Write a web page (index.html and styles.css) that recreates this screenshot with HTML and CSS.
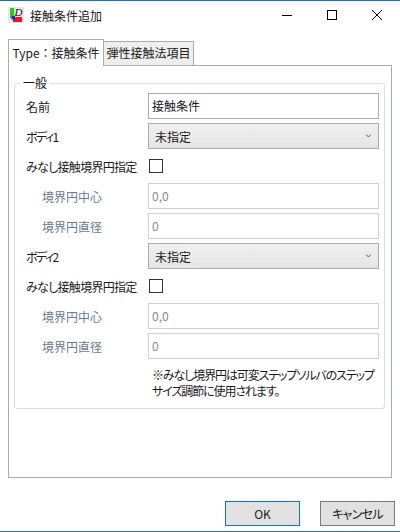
FILE: index.html
```html
<!DOCTYPE html>
<html lang="ja">
<head>
    <meta charset="UTF-8">
    <meta name="viewport" content="width=device-width, initial-scale=1.0">
    <title>接触条件追加</title>
    <link rel="stylesheet" href="styles.css">
</head>
<body>
    <div class="ventana">
        <div class="titulo">
            <svg class="logo" width="16" height="16" viewBox="0 0 16 16">
                <rect width="16" height="16" fill="#e8e8e8"/>
                <rect x="2" y="1" width="4" height="10" fill="#22d022"/>
                <rect x="5" y="10" width="9" height="5" fill="#e81818"/>
                <rect x="3.5" y="9" width="3.5" height="3.5" fill="#1a28e0"/>
                <text x="6.5" y="8.5" class="logo-d">D</text>
            </svg>
            <span class="titulo-texto">接触条件追加</span>
            <div class="controles">
                <svg width="12" height="12" viewBox="0 0 12 12"><path d="M1 6.5h10" stroke="#000" fill="none"/></svg>
                <svg width="12" height="12" viewBox="0 0 12 12"><rect x="1.5" y="1.5" width="9" height="9" stroke="#000" fill="none"/></svg>
                <svg width="12" height="12" viewBox="0 0 12 12"><path d="M1 1l10 10M11 1L1 11" stroke="#000" fill="none"/></svg>
            </div>
        </div>

        <div class="contenido">
            <div class="tabs">
                <div class="tab activa">Type：接触条件</div>
                <div class="tab">弾性接触法項目</div>
            </div>
            <div class="panel">
                <fieldset class="grupo">
                    <legend>一般</legend>
                    <div class="form">
                        <label>名前</label>
                        <div class="campo">接触条件</div>

                        <label class="angosto">ボディ1</label>
                        <div class="combo"><span>未指定</span><svg width="5" height="4" viewBox="0 0 5 4"><path d="M0 .5l2.5 2.5L5 .5" stroke="#555" fill="none"/></svg></div>

                        <label class="kana">みなし接触境界円指定</label>
                        <div class="check-fila"><span class="check"></span></div>

                        <label class="sub">境界円中心</label>
                        <div class="campo off">0,0</div>

                        <label class="sub">境界円直径</label>
                        <div class="campo off">0</div>

                        <label class="angosto">ボディ2</label>
                        <div class="combo"><span>未指定</span><svg width="5" height="4" viewBox="0 0 5 4"><path d="M0 .5l2.5 2.5L5 .5" stroke="#555" fill="none"/></svg></div>

                        <label class="kana">みなし接触境界円指定</label>
                        <div class="check-fila"><span class="check"></span></div>

                        <label class="sub">境界円中心</label>
                        <div class="campo off">0,0</div>

                        <label class="sub">境界円直径</label>
                        <div class="campo off">0</div>

                        <p class="nota">※みなし境界円は可変ステップソルバのステップ<br>サイズ調節に使用されます。</p>
                    </div>
                </fieldset>
            </div>
        </div>

        <div class="botones">
            <button class="principal">OK</button>
            <button class="kana">キャンセル</button>
        </div>
    </div>
</body>
</html>
```

FILE: styles.css
```css
* {
    box-sizing: border-box;
}

body {
    margin: 0;
    background-color: white;
    color: #1a1a1a;
    font-family: "Noto Sans CJK JP", "Noto Sans", sans-serif;
    font-size: 12px;
    font-feature-settings: "palt";
}

.ventana {
    width: 400px;
    height: 532px;
    display: flex;
    flex-direction: column;
    border-top: 1px solid #0f75bd;
    border-bottom: 1px solid #2a6f9f;
}

.titulo {
    height: 28px;
    display: flex;
    align-items: center;
    padding-left: 8px;
}

.logo-d {
    font-family: "Liberation Serif", serif;
    font-style: italic;
    font-size: 11px;
    fill: #111;
}

.titulo-texto {
    margin-left: 6px;
    font-feature-settings: normal;
}

.controles {
    margin-left: auto;
    display: flex;
    gap: 33px;
    padding-right: 17px;
}

.contenido {
    padding: 10px 8px 0;
}

.tabs {
    display: flex;
    align-items: flex-end;
    height: 26px;
    position: relative;
}

.tab {
    height: 24px;
    width: 91px;
    margin-left: -1px;
    line-height: 22px;
    text-align: center;
    background-color: #eee;
    border: 1px solid #ababab;
    border-bottom-width: 0;
}

.tab.activa {
    height: 27px;
    width: 96px;
    margin-left: 0;
    margin-bottom: -1px;
    line-height: 25px;
    background-color: white;
    font-feature-settings: normal;
    position: relative;
    z-index: 1;
}

.panel {
    height: 413px;
    border: 1px solid #ababab;
    padding: 10px 6px 0 5px;
}

.grupo {
    margin: 0;
    height: 333px;
    padding: 0 5px 0 11px;
    border: 1px solid #d5dfe5;
    border-radius: 3px;
}

.grupo legend {
    padding: 0 3px;
    margin-left: -6px;
    line-height: 14px;
}

.form {
    display: grid;
    grid-template-columns: 122px 231px;
    grid-auto-rows: 26px;
    row-gap: 4px;
    margin-top: 3px;
    align-items: center;
}

.kana {
    letter-spacing: -0.7px;
}

.angosto {
    letter-spacing: -1.6px;
}

.sub {
    padding-left: 16px;
    color: #6d7a8c;
}

.campo {
    height: 26px;
    line-height: 24px;
    padding-left: 3px;
    border: 1px solid #abadb3;
}

.campo.off {
    border-color: #d0d0d0;
    color: #8a8a94;
}

.combo {
    height: 26px;
    display: flex;
    align-items: center;
    justify-content: space-between;
    padding: 0 7px 0 6px;
    border: 1px solid #acacac;
    background: linear-gradient(#f0f0f0, #e5e5e5);
}

.check-fila {
    display: flex;
    align-items: center;
}

.check {
    width: 14px;
    height: 14px;
    margin-left: 1px;
    border: 1px solid #333;
    background-color: white;
}

.nota {
    grid-column: 2;
    grid-row: span 2;
    margin: 0;
    padding: 4px 0 0 4px;
    line-height: 16px;
    letter-spacing: -1.1px;
    align-self: start;
    white-space: nowrap;
}

.botones {
    margin-top: auto;
    display: flex;
    justify-content: flex-end;
    gap: 20px;
    padding: 0 5px 5px 0;
}

button {
    width: 75px;
    height: 25px;
    padding: 0;
    font-family: inherit;
    font-size: 12px;
    font-feature-settings: inherit;
    color: #1a1a1a;
    background-color: #e1e1e1;
    border: 1px solid #7a7a7a;
}

button.principal {
    border-color: #0f75bd;
    letter-spacing: normal;
}
```
